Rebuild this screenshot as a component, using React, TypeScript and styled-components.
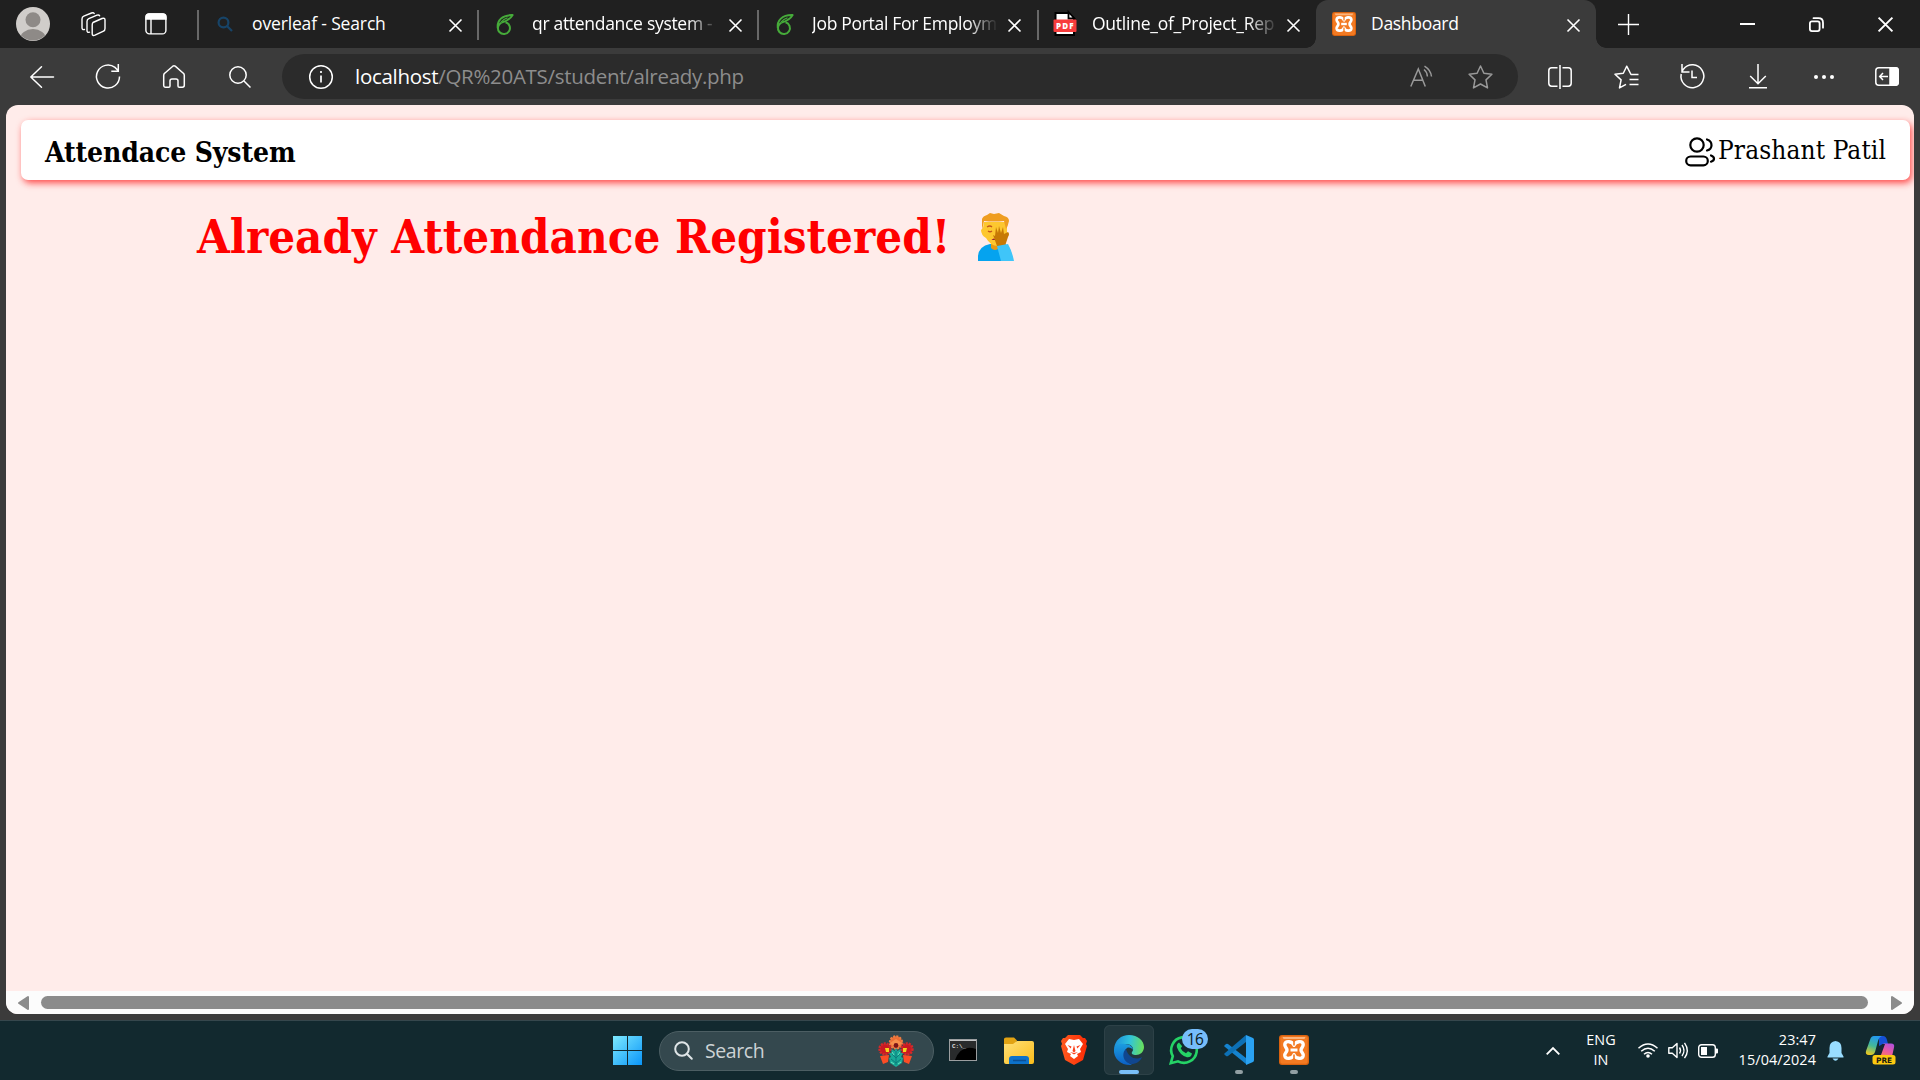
import React from "react";
import styled, { createGlobalStyle } from "styled-components";

const Global = createGlobalStyle`
  * { box-sizing: border-box; }
  html, body { margin: 0; padding: 0; background: #3b3b3b; overflow: hidden; }
`;

const ui = `"Open Sans", "Noto Sans", sans-serif`;
const serif = `"DejaVu Serif Condensed", "DejaVu Serif", serif`;

const Screen = styled.div`
  width: 1920px; height: 1080px; display: flex; flex-direction: column;
  background: #3b3b3b; font-family: ${ui}; overflow: hidden;
`;
const Svg = styled.svg`display: block; flex: none; overflow: visible;`;

/* Tab strip */
const TabStrip = styled.div`
  height: 48px; background: #202020; display: flex; align-items: stretch; flex: none;
`;
const StripTools = styled.div`
  width: 197px; display: flex; align-items: center; padding-left: 16px; flex: none;
`;
const Gap = styled.div<{ $w: number }>`width: ${p => p.$w}px; flex: none;`;
const Tab = styled.div<{ $w: number; $active?: boolean }>`
  width: ${p => p.$w}px; flex: none; display: flex; align-items: center; position: relative;
  background: ${p => (p.$active ? "#3b3b3b" : "transparent")};
  border-radius: 12px 12px 0 0; padding-left: 16px;
`;
const Divider = styled.i`
  position: absolute; left: 0; top: 10px; width: 1.5px; height: 30px; background: #686868;
`;
const Foot = styled.i<{ $side: "left" | "right" }>`
  position: absolute; bottom: 0; ${p => p.$side}: -10px; width: 10px; height: 10px;
  background: radial-gradient(circle at ${p => (p.$side === "left" ? "0 0" : "100% 0")}, #202020 9.5px, #3b3b3b 10px);
`;
const TabIcon = styled.div`width: 24px; height: 48px; display: flex; align-items: center; justify-content: center; flex: none;`;
const TabTitle = styled.div<{ $ls: number; $fade?: boolean }>`
  margin-left: 15px; width: 184px; flex: none; white-space: nowrap; color: #fff;
  font-size: 17.5px; line-height: 44px; height: 46px; letter-spacing: ${p => p.$ls}px;
  ${p => p.$fade && "-webkit-mask-image: linear-gradient(90deg, #000 156px, transparent 186px);"}
`;
const Close = styled.div<{ $gap?: number }>`margin-left: ${p => p.$gap ?? 13}px; display: flex; padding-top: 2px;`;
const StripEnd = styled.div`flex: 1; display: flex; align-items: center;`;

/* Toolbar */
const Toolbar = styled.div`height: 57px; display: flex; align-items: center; flex: none; padding-left: 28px;`;
const Address = styled.div`
  width: 1236px; height: 45px; border-radius: 23px; background: #2b2b2b; display: flex;
  align-items: center; flex: none; padding-left: 27px;
`;
const Url = styled.div`
  margin-left: 22px; width: 1032px; font-size: 20.5px; line-height: 45px; letter-spacing: -0.3px;
  color: #8d8d8d; white-space: nowrap;
`;
const Host = styled.span`color: #fff;`;

/* Web page */
const Viewport = styled.div`
  margin: 0 6px; height: 909px; flex: none; border-radius: 12px; background: #ffecea; overflow: hidden;
  display: flex; flex-direction: column;
`;
const Page = styled.div`flex: 1; padding: 15px 4px 0 15px;`;
const Header = styled.header`
  height: 60px; background: #fff; border-radius: 7px; display: flex; align-items: center;
  justify-content: space-between; padding: 0 25px 0 24px;
  box-shadow: 2px 3px 7px rgba(255, 20, 20, 0.75);
`;
const Brand = styled.div`
  font: bold 28px/60px ${serif}; color: #000; letter-spacing: -0.1px; padding-top: 5px; white-space: nowrap;
`;
const User = styled.div`display: flex; align-items: center; gap: 3px;`;
const UserIcon = styled.div`padding-top: 4px;`;
const UserName = styled.div`
  font: 26px/56px ${serif}; color: #000; letter-spacing: 0.1px; width: 167px; white-space: nowrap;
`;
const Notice = styled.h1`
  margin: 25px 0 0 176px; height: 64px; display: flex; align-items: center; color: #f00;
  font: bold 47px/64px ${serif}; letter-spacing: 0; white-space: nowrap;
`;
const NoticeText = styled.span`width: 781px; flex: none;`;
const ScrollBar = styled.div`
  height: 23px; background: #fcfcfc; display: flex; align-items: center; flex: none; padding-left: 12px;
`;
const Thumb = styled.div`width: 1827px; height: 13px; border-radius: 7px; background: #8b8b8b; margin: 0 23px 0 12px;`;

/* Taskbar */
const Taskbar = styled.div`
  margin-top: 6px; height: 60px; background: #12292f; border-top: 1px solid #36474d; flex: none;
  display: flex; align-items: center; padding-left: 613px;
`;
const SearchBox = styled.div`
  margin-left: 17px; width: 275px; height: 40px; border-radius: 20px; background: #34484e;
  border: 1px solid #4c5e63; display: flex; align-items: center; padding-left: 14px; flex: none;
`;
const SearchLabel = styled.div`margin-left: 12px; width: 173px; color: #cdd3d5; font-size: 19.5px; line-height: 36px; letter-spacing: -0.4px;`;
const TaskApp = styled.div<{ $w: number; $active?: boolean }>`
  width: ${p => p.$w}px; height: 50px; flex: none; display: flex; align-items: center; justify-content: center;
  position: relative; border-radius: 6px; margin-bottom: 1px;
  ${p => p.$active && "background: #22373d; box-shadow: inset 0 0 0 1px #2d4147;"}
`;
const Dot = styled.i<{ $w: number; $c: string }>`
  position: absolute; bottom: 1px; left: calc(50% - ${p => p.$w / 2}px); width: ${p => p.$w}px; height: 4px;
  border-radius: 2px; background: ${p => p.$c};
`;
const Badge = styled.span`
  position: absolute; left: 22px; top: 4px; width: 26px; height: 20px; border-radius: 10px;
  background: #76bdfb; color: #0b1a20; font-size: 15.5px; line-height: 20px; text-align: center; letter-spacing: -0.5px;
`;
const Tray = styled.div`margin-left: auto; display: flex; align-items: center; flex: none; padding-right: 24px;`;
const TrayText = styled.div<{ $w: number; $align: string; $ls?: number }>`
  width: ${p => p.$w}px; text-align: ${p => p.$align}; color: #fff; font-size: 14.4px; line-height: 20px;
  white-space: pre; letter-spacing: ${p => p.$ls ?? 0}px; padding-bottom: 1px;
`;

const Cross = ({ s = 13, w = 1.6 }: { s?: number; w?: number }) => (
  <Svg width={s} height={s} viewBox="0 0 13 13" stroke="#fff" strokeWidth={w} fill="none"><path d="M.5.5l12 12M12.5.5l-12 12" /></Svg>
);
const Overleaf = () => (
  <Svg width="18" height="21" viewBox="0 0 18 21" fill="none" stroke="#46ab3a" strokeWidth="2" strokeLinejoin="round">
    <path d="M5.500 8.600A6 6 0 1 0 9.500 8.300" />
    <path d="M1.800 14C.8 6.500 6 .8 16.600 1.100 14.500 5 11 7 5.500 8.600" />
    <path d="M5 8.200C7 5.800 9 4.600 11.500 3.800" strokeWidth="1.200" />
  </Svg>
);
const Pdf = () => (
  <Svg width="24" height="24" viewBox="0 0 24 24">
    <path d="M2.500 1h13l5.500 5.500v16.500h-18.500z" fill="#fff" stroke="#000" strokeWidth="2" />
    <path d="M15.500 0v6.500h6z" fill="#fff" stroke="#000" strokeWidth="1.800" />
    <rect x=".5" y="7.500" width="23" height="12.500" rx="1" fill="#f83c3c" />
    <text x="3" y="16.700" fontSize="8" fontFamily="Open Sans" fontWeight="800" fill="#fff" textLength="17.500">PDF</text>
  </Svg>
);
const Xampp = ({ s }: { s: number }) => (
  <Svg width={s} height={s} viewBox="0 0 30 30">
    <rect width="30" height="30" rx="3" fill="#d9620f" />
    <rect x="1.300" y="1.300" width="27.400" height="27.400" rx="2" fill="#f37a22" />
    <path d="M3.500 2h23l-1 2h-21z" fill="#fbb47d" />
    <path d="M15 10.300C13.500 6 6.500 5.300 5.800 9.300 5.400 12 8 12.600 8 15s-2.600 3-2.200 5.700C6.500 24.700 13.500 24 15 19.700 16.500 24 23.500 24.700 24.200 20.700 24.600 18 22 17.400 22 15s2.600-3 2.200-5.700C23.500 5.300 16.500 6 15 10.300z" fill="none" stroke="#fff" strokeWidth="3.400" strokeLinejoin="round" />
    <path d="M11.500 15h7" stroke="#fff" strokeWidth="3" />
    <path d="M15 5v5.500M15 19.500V25" stroke="#f37a22" strokeWidth="1.600" />
  </Svg>
);

const App = () => (
  <>
    <Global />
    <Screen>
      <TabStrip>
        <StripTools>
          <Svg width="34" height="34" viewBox="0 0 34 34">
            <defs><clipPath id="av"><circle cx="17" cy="17" r="16.500" /></clipPath></defs>
            <circle cx="17" cy="17" r="17" fill="#d0cdca" />
            <circle cx="17" cy="12.700" r="7.500" fill="#8e8a87" />
            <ellipse cx="17" cy="32" rx="13" ry="10" fill="#8e8a87" clipPath="url(#av)" />
          </Svg>
          <Gap $w={31} />
          <Svg width="25" height="25" viewBox="0 0 25 25" fill="none" stroke="#fff" strokeWidth="1.400" strokeLinejoin="round" strokeLinecap="round">
            <path d="M12 10.500l9-4q3-1 3 1.500v8.500q0 2-1.500 2.700l-8.500 4q-2.800 1-2.800-1.500V13q0-1.800.8-2.500z" />
            <path d="M8.500 20.200q-2.500.8-2.500-1.700V9.500q0-2 1.800-2.800l8.200-3.500q2-.6 2.600.6M3.500 17.500q-2.500.5-2.500-1.700V7q0-2 1.800-2.800L10.500 1q2-.7 2.700.5" />
          </Svg>
          <Gap $w={39} />
          <Svg width="22" height="22" viewBox="0 0 22 22" fill="none" stroke="#fff" strokeWidth="1.400">
            <rect x=".9" y=".9" width="20" height="20" rx="3.500" /><path d="M1 6V4q0-3 3-3h14q3 0 3 3v2z" fill="#fff" /><path d="M6 6v15" />
          </Svg>
        </StripTools>
        <Tab $w={280}>
          <Divider />
          <TabIcon><Svg width="16" height="16" viewBox="0 0 16 16" fill="none" stroke="#174468" strokeWidth="2.200"><circle cx="6.500" cy="6.500" r="4.900" /><path d="M10 10l5 5" /></Svg></TabIcon>
          <TabTitle $ls={-0.15}>overleaf - Search</TabTitle><Close><Cross /></Close>
        </Tab>
        <Tab $w={280}><Divider /><TabIcon><Overleaf /></TabIcon><TabTitle $ls={-0.3} $fade>qr attendance system -</TabTitle><Close><Cross /></Close></Tab>
        <Tab $w={280}><Divider /><TabIcon><Overleaf /></TabIcon><TabTitle $ls={-0.3} $fade>Job Portal For Employm</TabTitle><Close $gap={12}><Cross /></Close></Tab>
        <Tab $w={279}><Divider /><TabIcon><Pdf /></TabIcon><TabTitle $ls={-0.25} $fade>Outline_of_Project_Rep</TabTitle><Close $gap={11}><Cross /></Close></Tab>
        <Tab $w={280} $active><Foot $side="left" /><TabIcon><Xampp s={24} /></TabIcon><TabTitle $ls={-0.3}>Dashboard</TabTitle><Close $gap={12}><Cross /></Close><Foot $side="right" /></Tab>
        <StripEnd>
          <Gap $w={22} />
          <Svg width="21" height="21" viewBox="0 0 21 21" stroke="#fff" strokeWidth="1.400"><path d="M10.500 0v21M0 10.500h21" /></Svg>
          <Gap $w={101} />
          <Svg width="15" height="2"><rect width="15" height="2" fill="#fff" /></Svg>
          <Gap $w={54} />
          <Svg width="15" height="15" viewBox="0 0 15 15" fill="none" stroke="#fff" strokeWidth="1.800"><rect x=".9" y="4.400" width="9.700" height="9.700" rx="2" /><path d="M4.500 1.200h5q4.500 0 4.500 4.500v5" strokeLinecap="round" /></Svg>
          <Gap $w={54} />
          <Cross s={15} w={1.7} />
        </StripEnd>
      </TabStrip>

      <Toolbar>
        <Gap $w={2} />
        <Svg width="24" height="22" viewBox="0 0 24 22" fill="none" stroke="#fff" strokeWidth="1.500" strokeLinecap="round" strokeLinejoin="round"><path d="M11.500.8L.8 11l10.700 10.200M.8 11H23.500" /></Svg>
        <Gap $w={42} />
        <Svg width="25" height="25" viewBox="0 0 25 25" fill="none" stroke="#fff" strokeWidth="1.500"><path d="M23.500 12.500A11.500 11.500 0 1 1 19 3.400L22.300 6.800M22.300 0v7.300h-7" /></Svg>
        <Gap $w={42} />
        <Svg width="22" height="23" viewBox="0 0 22 23" fill="none" stroke="#fff" strokeWidth="1.500" strokeLinejoin="round"><path d="M9.800 1.200q1.200-1 2.400 0l8.100 7q1 .8 1 2.100v10q0 1.900-1.900 1.900h-3.100q-1.300 0-1.300-1.300v-5q0-2-2-2h-4q-2 0-2 2v5q0 1.300-1.300 1.300H2.600Q.7 22.200.7 20.300v-10q0-1.300 1-2.100z" /></Svg>
        <Gap $w={44} />
        <Svg width="22" height="22" viewBox="0 0 22 22" fill="none" stroke="#fff" strokeWidth="1.500"><circle cx="9" cy="9" r="8.200" /><path d="M15 15l6.500 6.500" /></Svg>
        <Gap $w={31} />
        <Address>
          <Svg width="24" height="24" viewBox="0 0 24 24" fill="none" stroke="#fff" strokeWidth="1.500"><circle cx="12" cy="12" r="11.300" /><path d="M12 10.500v7M12 6v2" strokeWidth="1.700" /></Svg>
          <Url><Host>localhost</Host>/QR%20ATS/student/already.php</Url>
          <Gap $w={23} />
          <Svg width="24" height="22" viewBox="0 0 24 22" fill="none" stroke="#999" strokeWidth="1.500"><path d="M.8 20.500L8.300 3l7 17.500M3.800 14.300h9M14 3.500q3.200 2.500 3.400 7M14.500.2q6.200 3.800 7 10.300" /></Svg>
          <Gap $w={34} />
          <Svg width="25" height="24" viewBox="0 0 25 24" fill="none" stroke="#999" strokeWidth="1.500" strokeLinejoin="round"><path d="M12.500 1l3.400 7.300 8 1-5.900 5.600 1.500 8-7-3.900-7 3.900 1.500-8L1.100 9.300l8-1z" /></Svg>
        </Address>
        <Gap $w={29.5} />
        <Svg width="24" height="24" viewBox="0 0 24 24" fill="none" stroke="#fff" strokeWidth="1.500"><path d="M12 0v24M9.500 2.800H3.700Q.8 2.800.8 5.700v12.600q0 2.900 2.900 2.900h5.800M14.500 2.800h5.800q2.900 0 2.900 2.900v12.600q0 2.900-2.900 2.900h-5.800" /></Svg>
        <Gap $w={42} />
        <Svg width="25" height="24" viewBox="0 0 25 24" fill="none" stroke="#fff" strokeWidth="1.500" strokeLinejoin="round"><path d="M24.500 9.500H17L12.700 1.200 9.300 8.300l-8.300 1 6.100 5.600-1.600 8 6.500-3.600M15.500 14.500h9M15.500 19.500h9" /></Svg>
        <Gap $w={41.5} />
        <Svg width="25" height="25" viewBox="0 0 25 25" fill="none" stroke="#fff" strokeWidth="1.500"><path d="M1.200 10A11.400 11.400 0 1 0 3.400 5.200L2 7.600M2 0v8h7.500M12 6.500v7h5" /></Svg>
        <Gap $w={44} />
        <Svg width="18" height="25" viewBox="0 0 18 25" fill="none" stroke="#fff" strokeWidth="1.500"><path d="M9 0v19.500M1.200 12L9 19.700 16.800 12M0 23.800h18" /></Svg>
        <Gap $w={47} />
        <Svg width="20" height="4" viewBox="0 0 20 4" fill="#fff"><circle cx="2" cy="2" r="2" /><circle cx="10" cy="2" r="2" /><circle cx="18" cy="2" r="2" /></Svg>
        <Gap $w={41} />
        <Svg width="24" height="19" viewBox="0 0 24 19" fill="none" stroke="#fff" strokeWidth="1.500"><rect x=".8" y=".8" width="22.400" height="17.400" rx="3" /><path d="M15 .8h5.500q2.700 0 2.700 2.700v12q0 2.700-2.700 2.700H15z" fill="#fff" /><path d="M13 9.500H5M8 6L4.700 9.500 8 13" /></Svg>
      </Toolbar>

      <Viewport>
        <Page>
          <Header>
            <Brand>Attendace System</Brand>
            <User>
              <UserIcon>
                <Svg width="30" height="30" viewBox="0 0 30 30" fill="none" stroke="#000" strokeWidth="2.200" strokeLinecap="round">
                  <circle cx="12" cy="8" r="6.700" /><rect x="1.200" y="19.500" width="21.600" height="8.800" rx="4.400" />
                  <path d="M22 2.500q4.500 1.300 4.500 5.700 0 4-4.500 5.300M26 18.500q3 1 3 3.200 0 2-3 3" />
                </Svg>
              </UserIcon>
              <UserName>Prashant Patil</UserName>
            </User>
          </Header>
          <Notice>
            <NoticeText>Already Attendance Registered!</NoticeText>
            <Svg width="36" height="48" viewBox="0 0 36 48">
              <path d="M0 48V43q1-10 12-12h15q6 2 8 17z" fill="#05a3ef" />
              <path d="M13 26h8v9q-4 4-8 0z" fill="#e79a13" />
              <path d="M6 9h23v12q-2 11-10 12-7-1-11-8Q3 22 3 17l2-2z" fill="#fdc72f" />
              <path d="M4 17V6q1-3 5-4l3-2 4 1 5-1 5 3q5 1 5 5-1 5-3 8-1-4-2-8-10 1-20 0-1 5-2 9z" fill="#ef9d20" />
              <path d="M9 14q3-2 5 0M10 18q2 1.500 4 0" fill="none" stroke="#c5571b" strokeWidth="1.300" />
              <path d="M13.500 27q2.500-3 4 0z" fill="#9c2234" />
              <path d="M15 22l2 1 1-9 2 6 1-7 2 7 2-6 1 7 4-2q2 2 0 5l-3 9q-5 2-8 0z" fill="#c77905" />
              <path d="M19 33l11-2q4 7 6 17H23z" fill="#3fc5f9" />
            </Svg>
          </Notice>
        </Page>
        <ScrollBar>
          <Svg width="11" height="14" viewBox="0 0 11 14"><path d="M10 1v12L1 7z" fill="#8b8b8b" stroke="#8b8b8b" strokeWidth="2" strokeLinejoin="round" /></Svg>
          <Thumb />
          <Svg width="11" height="14" viewBox="0 0 11 14"><path d="M1 1v12l9-6z" fill="#8b8b8b" stroke="#8b8b8b" strokeWidth="2" strokeLinejoin="round" /></Svg>
        </ScrollBar>
      </Viewport>

      <Taskbar>
        <Svg width="29" height="29" viewBox="0 0 29 29">
          <defs><linearGradient id="win" gradientUnits="userSpaceOnUse" x1="0" y1="0" x2="29" y2="29"><stop stopColor="#7deaff" /><stop offset="1" stopColor="#0a95f8" /></linearGradient></defs>
          <path d="M0 0h14v14H0zM15 0h14v14H15zM0 15h14v14H0zM15 15h14v14H15z" fill="url(#win)" />
        </Svg>
        <SearchBox>
          <Svg width="19" height="19" viewBox="0 0 19 19" fill="none" stroke="#dfe5e7" strokeWidth="2"><circle cx="8" cy="8" r="6.800" /><path d="M12.800 12.800l5 5" strokeLinecap="round" /></Svg>
          <SearchLabel>Search</SearchLabel>
          <Svg width="36" height="32" viewBox="0 0 36 32">
            <circle cx="18" cy="7.500" r="6.200" fill="#ee6e35" stroke="#ed7e44" strokeDasharray="2 1.200" strokeWidth="2" /><path d="M12 8l6-4 6 4-6 6z" fill="#f78e4c" /><circle cx="18" cy="10.500" r="2.400" fill="#7c1418" />
            <circle cx="7" cy="14" r="5.500" fill="#c91922" stroke="#d32a2a" strokeDasharray="2 1" strokeWidth="2.400" /><circle cx="29" cy="14" r="5.500" fill="#c91922" stroke="#d32a2a" strokeDasharray="2 1" strokeWidth="2.400" />
            <path d="M7 13h4v4H8zM25 13h4l-1 4h-3z" fill="#f8d21b" />
            <path d="M2 21l9-1-1 7-5 2zM34 21l-9-1 1 7 5 2z" fill="#fb4d26" />
            <path d="M18 13l1.500 3 3-2v4l2.500 0-2 4 2 1-1 5-6 4-6-4-1-5 2-1-2-4h2.500v-4l3 2z" fill="#18aa98" />
            <path d="M18 16v14M14 19l4 4 4-4M13 24l5 4 5-4" fill="none" stroke="#0d7d7c" />
            <path d="M14 17l2 3M22 17l-2 3M13 27l3 2M23 27l-3 2" stroke="#6be0bd" />
          </Svg>
        </SearchBox>
        <TaskApp $w={58}><Svg width="28" height="22" viewBox="0 0 28 22"><rect x=".5" y=".5" width="27" height="21" fill="#000" stroke="#9b9ea0" /><path d="M1 1h26v9Q12 5 6 21H1z" fill="#292b2c" /><path d="M1 1.500h26" stroke="#c2c4c5" /><text x="3" y="8.500" fontFamily="Liberation Mono" fontWeight="bold" fontSize="6" fill="#ddd" textLength="14">C:\_</text></Svg></TaskApp>
        <TaskApp $w={53}>
          <Svg width="30" height="27" viewBox="0 0 30 27">
            <defs><linearGradient id="fold" x2="1" y2="1"><stop stopColor="#ffe078" /><stop offset="1" stopColor="#fbbd1a" /></linearGradient></defs>
            <path d="M0 2Q0 .5 2 .5h8l3 3-2 5H0z" fill="#e2a313" /><path d="M0 7h9l4-3h15q2 0 2 2v19q0 2-2 2H2q-2 0-2-2z" fill="url(#fold)" /><path d="M5 27v-5q0-3 3-3h14q3 0 3 3v5z" fill="#0d72ca" /><path d="M9 23.500h13" stroke="#0b4f94" strokeWidth="1.500" />
          </Svg>
        </TaskApp>
        <TaskApp $w={57}>
          <Svg width="26" height="30" viewBox="0 0 26 30">
            <defs><linearGradient id="brave"><stop stopColor="#ff5a1f" /><stop offset="1" stopColor="#fb2b05" /></linearGradient></defs>
            <path d="M7 0h12l3 3 2 0 2 3-1 3 1 2-4 14-9 5-9-5L0 11l1-2-1-3 2-3h2z" fill="url(#brave)" />
            <path d="M13 5l5-1 4 5-3 5 1 3-4 2 1 2-4 3-4-3 1-2-4-2 1-3-3-5 4-5z" fill="#fff" /><path d="M6.500 10l4 1.500-.8 2zM19.500 10l-4 1.500.8 2zM13 10l1.500 6-1.500 1.500L11.500 16zM9 17l4 2.500 4-2.500-4 1z" fill="#fb401c" />
          </Svg>
        </TaskApp>
        <Gap $w={2} />
        <TaskApp $w={50} $active>
          <Svg width="30" height="30" viewBox="0 0 30 30">
            <defs>
              <linearGradient id="eg" x1="0" y1=".5" x2="1" y2=".6"><stop stopColor="#1c8fdc" /><stop offset=".5" stopColor="#31c4dc" /><stop offset="1" stopColor="#6be157" /></linearGradient>
              <linearGradient id="eb" x1="0" y1="0" x2="0" y2="1"><stop stopColor="#1b9de0" /><stop offset="1" stopColor="#0c5fc4" /></linearGradient>
            </defs>
            <path d="M0 14C1 5 7 0 15 0c9 0 15 6 15 12 0 5-4 8-8 8-3 0-5-1-4-3 3-3 0-8-6-8C6 9 1 11 0 14z" fill="url(#eg)" />
            <path d="M0 14c1-4 6-6 11-5 5 0 8 3 8 6-1-2-4-3-6-2-4 3-3 10 1 14 2 2 4 3 4 3C8 31-1 24 0 14z" fill="url(#eb)" />
            <path d="M12 14c-5 4-3 15 7 15 5-1 8-4 9-7-5 3-13 2-16-8z" fill="#10468f" />
          </Svg>
          <Dot $w={20} $c="#79bff8" />
        </TaskApp>
        <Gap $w={6} />
        <TaskApp $w={48}>
          <Svg width="30" height="30" viewBox="0 0 30 30"><path d="M1.800 28.200l2-7A12.800 12.800 0 1 1 9 26.300z" fill="none" stroke="#25d366" strokeWidth="2.600" /><path d="M10 7.500q-3 2-2 5 3 8 10 9.800 4 .5 5-3.800l-4-2.300-2 2.100q-4-1.500-5.300-5l1.500-2z" fill="#25d366" /></Svg>
          <Badge>16</Badge>
        </TaskApp>
        <Gap $w={6} />
        <TaskApp $w={50}>
          <Svg width="30" height="30" viewBox="0 0 30 30"><path d="M0 11l2-2q1-.7 2 0l18 14v6L1 12z" fill="#1583cf" /><path d="M0 19l2 2q1 .7 2 0L22 7V0L1 18z" fill="#0d70b5" /><path d="M22 0l7 3q1 .5 1 2v20q0 1.500-1 2l-7 3z" fill="#2aa2f2" /></Svg>
          <Dot $w={8} $c="#929fa3" />
        </TaskApp>
        <Gap $w={5} />
        <TaskApp $w={50}><Xampp s={30} /><Dot $w={8} $c="#929fa3" /></TaskApp>
        <Tray>
          <Svg width="14" height="8" viewBox="0 0 14 8" fill="none" stroke="#fff" strokeWidth="1.800"><path d="M.7 7.300L7 1l6.300 6.300" /></Svg>
          <Gap $w={26} />
          <TrayText $w={30} $align="center" $ls={0}>{"ENG\nIN"}</TrayText>
          <Gap $w={22} />
          <Svg width="20" height="15" viewBox="0 0 20 15" fill="none" stroke="#fff" strokeWidth="1.500"><path d="M.5 5.200q9.500-8.500 19 0M3.200 8.200q6.800-6 13.600 0M6 11.200q4-3.500 8 0" /><circle cx="10" cy="13" r="1.800" fill="#fff" stroke="none" /></Svg>
          <Gap $w={10} />
          <Svg width="20" height="17" viewBox="0 0 20 17" fill="none" stroke="#fff" strokeWidth="1.400" strokeLinejoin="round"><path d="M.8 5.800h3.500L9 1.500v14L4.300 11.200H.8zM11.500 5.500q2 3 0 6M14 3q4 5.500 0 11M16.500.8q5.500 7.700 0 15.400" /></Svg>
          <Gap $w={10} />
          <Svg width="20" height="14" viewBox="0 0 20 14"><rect x=".7" y=".7" width="16.600" height="12.600" rx="2.800" fill="none" stroke="#fff" strokeWidth="1.400" /><path d="M3 3h6v8H3zM18 4.500h1q1 0 1 1v3q0 1-1 1h-1z" fill="#fff" /></Svg>
          <TrayText $w={98} $align="right" $ls={0.1}>{"23:47\n15/04/2024"}</TrayText>
          <Gap $w={11} />
          <Svg width="17" height="20" viewBox="0 0 17 20" fill="#99ddff"><path d="M8.500 0q6 .5 6 7v5l2 3.500v1H.5v-1l2-3.500V7q0-6.500 6-7zM5.500 17.500h6q-3 4.500-6 0z" /></Svg>
          <Gap $w={22} />
          <Svg width="30" height="29" viewBox="0 0 30 29">
            <defs>
              <linearGradient id="c1" x1=".5" y1="0" x2=".2" y2="1"><stop stopColor="#249aef" /><stop offset=".5" stopColor="#45b996" /><stop offset="1" stopColor="#f3c91b" /></linearGradient>
              <linearGradient id="c2" x1="1" y1="0" x2=".3" y2="1"><stop stopColor="#a94ee6" /><stop offset=".6" stopColor="#ed5c9c" /><stop offset="1" stopColor="#fb8153" /></linearGradient>
            </defs>
            <path d="M13 0h4q3 0 4 4l1 4h-5l-4 2z" fill="#1550d5" />
            <path d="M8 0h8q-3 1-4 5l-3 11q-1 3-4 3H3q-4 0-3-4L4 4q1-4 4-4z" fill="url(#c1)" />
            <path d="M18 7.500h7q4 0 3 4l-2 9H9q4 0 5-4l2-6q.600-3 2-3z" fill="url(#c2)" />
            <path d="M16 8h3l-4 11h-4q2-1 3-4z" fill="#172334" />
            <rect x="6.500" y="19" width="23" height="9.500" rx="2.500" fill="#fdc910" /><text x="10" y="26.500" fontFamily="DejaVu Sans" fontWeight="bold" fontSize="7.400" fill="#1c1c10">PRE</text>
          </Svg>
        </Tray>
      </Taskbar>
    </Screen>
  </>
);

export default App;
